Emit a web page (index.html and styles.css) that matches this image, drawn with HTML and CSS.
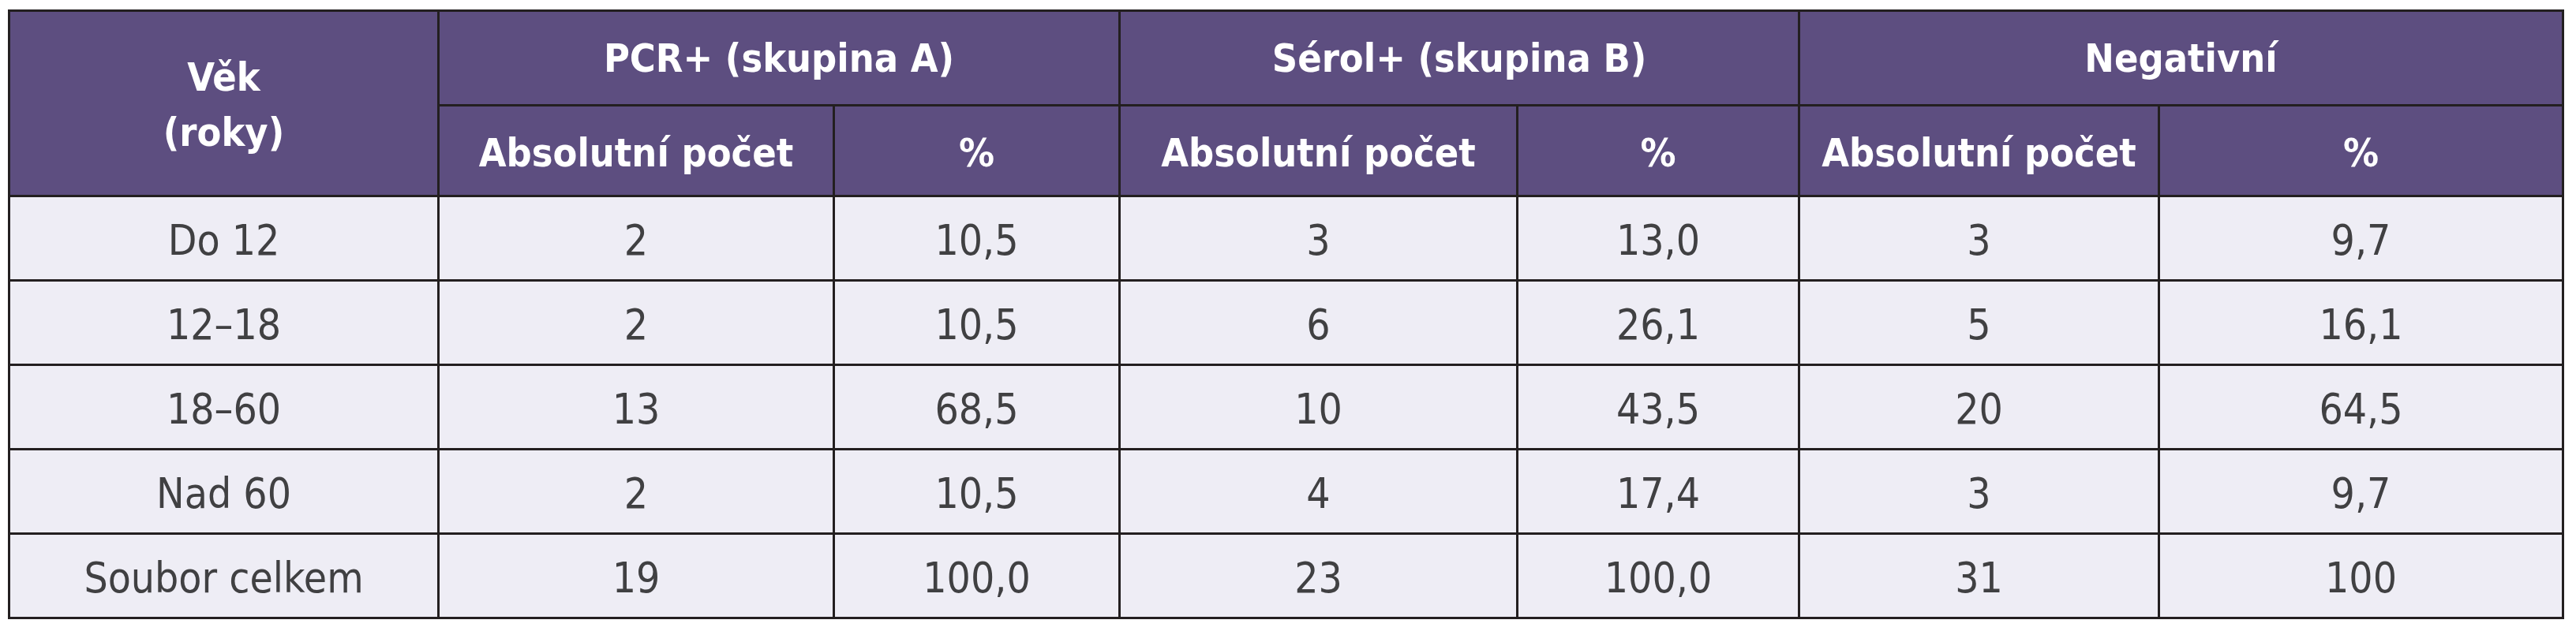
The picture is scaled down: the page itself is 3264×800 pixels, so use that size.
FILE: index.html
```html
<!DOCTYPE html>
<html lang="cs">
<head>
<meta charset="utf-8">
<title>Tabulka</title>
<link rel="stylesheet" href="styles.css">
</head>
<body>
<table class="data">
  <colgroup>
    <col class="c-age">
    <col class="c-a-abs">
    <col class="c-a-pct">
    <col class="c-b-abs">
    <col class="c-b-pct">
    <col class="c-n-abs">
    <col class="c-n-pct">
  </colgroup>
  <thead>
    <tr class="h1">
      <th rowspan="2" class="age-head">Věk<br>(roky)</th>
      <th colspan="2">PCR+ (skupina A)</th>
      <th colspan="2">Sérol+ (skupina B)</th>
      <th colspan="2">Negativní</th>
    </tr>
    <tr class="h2">
      <th>Absolutní počet</th>
      <th>%</th>
      <th>Absolutní počet</th>
      <th>%</th>
      <th>Absolutní počet</th>
      <th>%</th>
    </tr>
  </thead>
  <tbody>
    <tr><td>Do 12</td><td>2</td><td>10,5</td><td>3</td><td>13,0</td><td>3</td><td>9,7</td></tr>
    <tr><td>12–18</td><td>2</td><td>10,5</td><td>6</td><td>26,1</td><td>5</td><td>16,1</td></tr>
    <tr><td>18–60</td><td>13</td><td>68,5</td><td>10</td><td>43,5</td><td>20</td><td>64,5</td></tr>
    <tr><td>Nad 60</td><td>2</td><td>10,5</td><td>4</td><td>17,4</td><td>3</td><td>9,7</td></tr>
    <tr><td>Soubor celkem</td><td>19</td><td>100,0</td><td>23</td><td>100,0</td><td>31</td><td>100</td></tr>
  </tbody>
</table>
</body>
</html>
```
FILE: styles.css
```css
html, body {
  margin: 0;
  padding: 0;
  background: #ffffff;
}

body {
  padding: 12px 0 0 10px;
}

.data {
  border-collapse: collapse;
  table-layout: fixed;
  width: 3239px;
  font-family: "DejaVu Sans Condensed", "DejaVu Sans", "Liberation Sans", sans-serif;
}

.c-age { width: 544px; }
.c-a-abs { width: 501px; }
.c-a-pct { width: 362px; }
.c-b-abs { width: 504px; }
.c-b-pct { width: 357px; }
.c-n-abs { width: 456px; }
.c-n-pct { width: 512px; }

.data th,
.data td {
  border: 3px solid #231f20;
  text-align: center;
  vertical-align: middle;
  padding: 0;
  white-space: nowrap;
}

.data th {
  background: #5d4e80;
  color: #ffffff;
  font-weight: 700;
  font-size: 50px;
  line-height: 70px;
}

.h1 th { height: 117px; }
.h1 th.age-head { padding-top: 4px; }
.h2 th { height: 106px; padding-top: 6px; }

.data td {
  background: #eeedf5;
  color: #404042;
  font-weight: 400;
  font-size: 53px;
  height: 100px;
  padding-top: 4px;
}
```
